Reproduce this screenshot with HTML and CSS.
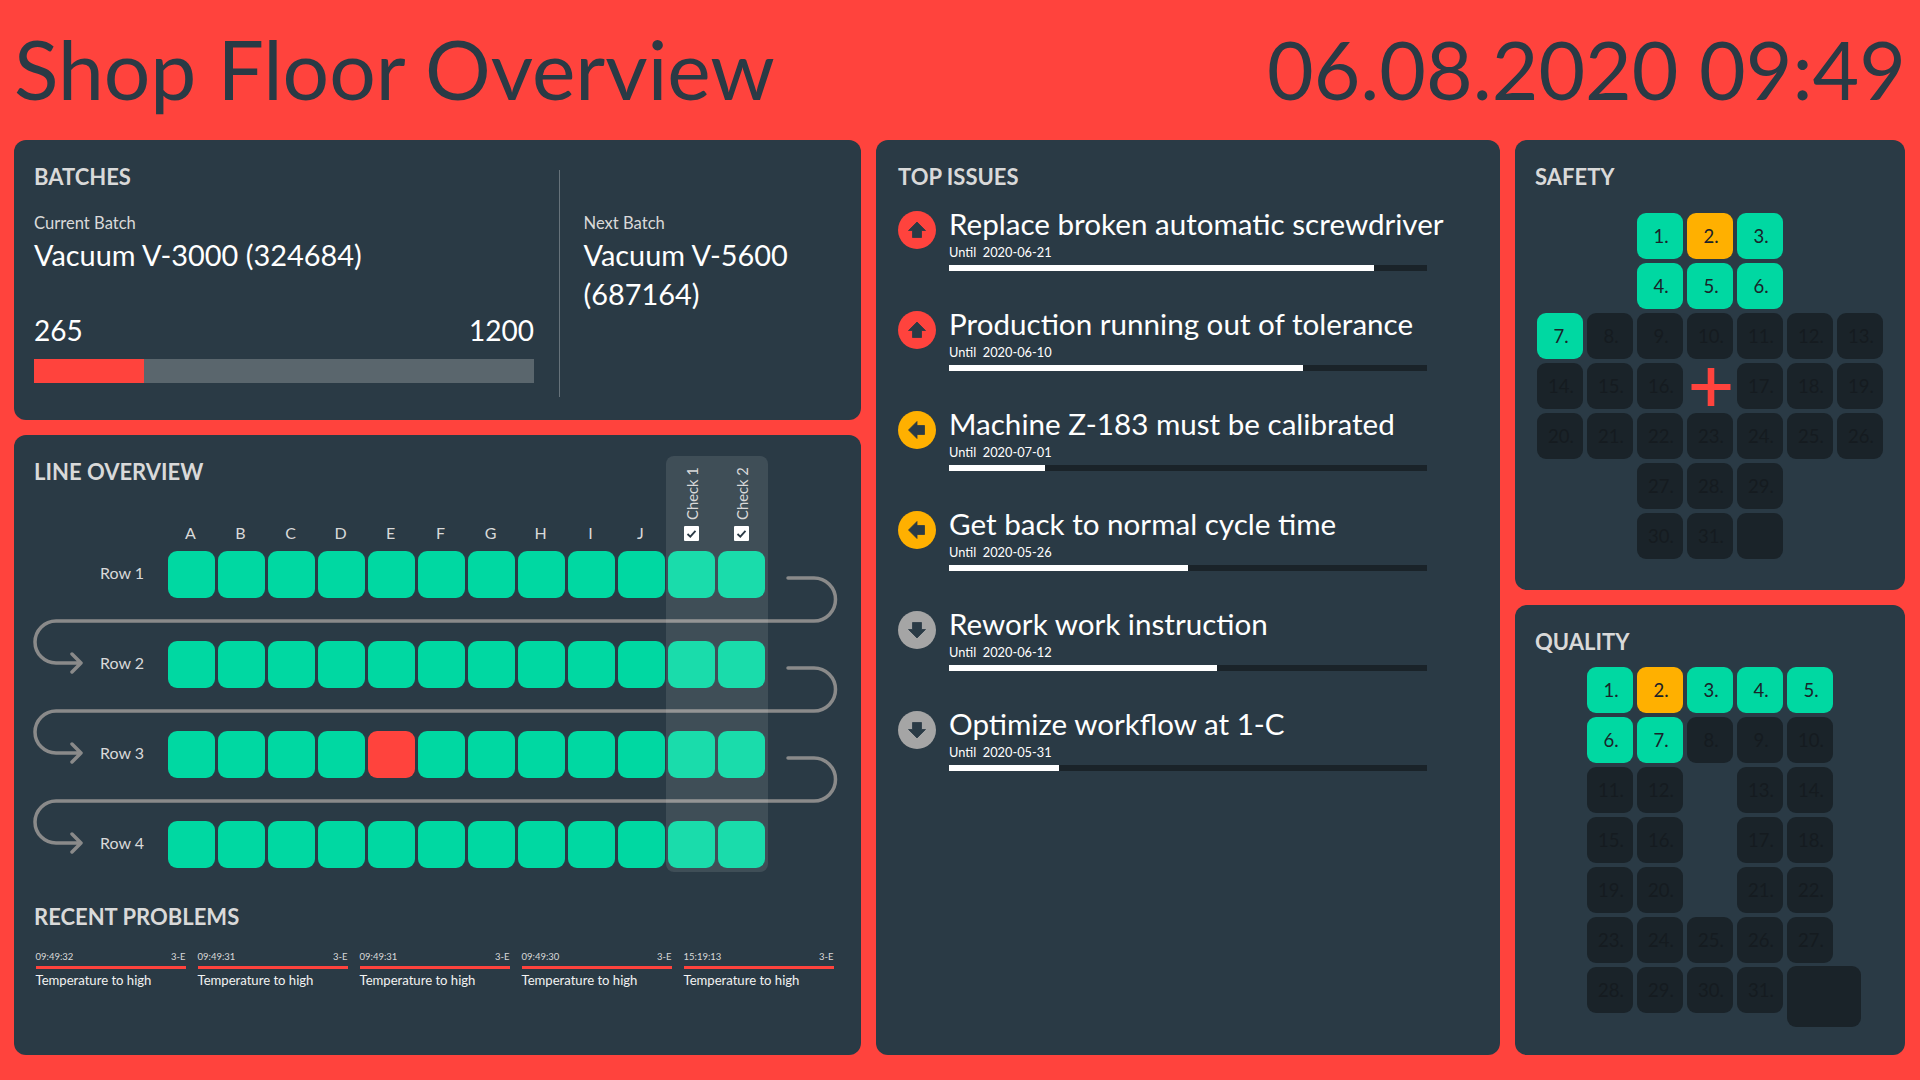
FILE: index.html
```html
<!DOCTYPE html>
<html lang="en">
  <head>
    <meta charset="UTF-8" />
    <title>Shop Floor Overview</title>
    <link rel="stylesheet" href="styles.css">
  </head>
  <body>
    <header class="top">
      <h1>Shop Floor Overview</h1>
      <div class="clock">06.08.2020 09:49</div>
    </header>

    <main class="board">
      <div class="col-left">
        <section class="card batches">
          <div class="batch-current">
            <h2>BATCHES</h2>
            <div class="batch-label">Current Batch</div>
            <div class="batch-name">Vacuum V-3000 (324684)</div>
            <div class="batch-count"><span>265</span><span>1200</span></div>
            <div class="batch-bar"><div class="batch-fill" style="width: 22%"></div></div>
          </div>
          <div class="batch-next">
            <div class="batch-label">Next Batch</div>
            <div class="batch-name">Vacuum V-5600 (687164)</div>
          </div>
        </section>

        <section class="card line">
          <h2>LINE OVERVIEW</h2>
          <div class="line-head">
            <span>A</span><span>B</span><span>C</span><span>D</span><span>E</span><span>F</span><span>G</span><span>H</span><span>I</span><span>J</span>
          </div>
          <div class="line-row">
            <div class="row-name">Row 1</div>
            <i></i><i></i><i></i><i></i><i></i><i></i><i></i><i></i><i></i><i></i><i></i><i></i>
          </div>
          <div class="line-row">
            <div class="row-name">Row 2</div>
            <i></i><i></i><i></i><i></i><i></i><i></i><i></i><i></i><i></i><i></i><i></i><i></i>
          </div>
          <div class="line-row">
            <div class="row-name">Row 3</div>
            <i></i><i></i><i></i><i></i><i class="bad"></i><i></i><i></i><i></i><i></i><i></i><i></i><i></i>
          </div>
          <div class="line-row">
            <div class="row-name">Row 4</div>
            <i></i><i></i><i></i><i></i><i></i><i></i><i></i><i></i><i></i><i></i><i></i><i></i>
          </div>

          <svg class="flow" viewBox="14 435 847 620" fill="none" stroke="#8a8a8a" stroke-width="3.5" stroke-linecap="round" stroke-linejoin="round">
            <path d="M788 578H814A21.5 21.5 0 0 1 814 621H56A21 21 0 0 0 56 663H81M72 654L81 663L72 672" />
            <path d="M788 668H814A21.5 21.5 0 0 1 814 711H56A21 21 0 0 0 56 753H81M72 744L81 753L72 762" />
            <path d="M788 758H814A21.5 21.5 0 0 1 814 801H56A21 21 0 0 0 56 843H81M72 834L81 843L72 852" />
          </svg>

          <div class="checks">
            <div class="check">
              <span class="check-name">Check 1</span>
              <svg class="check-box" viewBox="0 0 15 15"><rect width="15" height="15" rx="1" fill="#fff" /><path d="M3.5 8L6.3 10.6L11.5 4.8" fill="none" stroke="#2a3a45" stroke-width="1.8" /></svg>
            </div>
            <div class="check">
              <span class="check-name">Check 2</span>
              <svg class="check-box" viewBox="0 0 15 15"><rect width="15" height="15" rx="1" fill="#fff" /><path d="M3.5 8L6.3 10.6L11.5 4.8" fill="none" stroke="#2a3a45" stroke-width="1.8" /></svg>
            </div>
          </div>

          <h2 class="problems-title">RECENT PROBLEMS</h2>
          <div class="problems">
            <div class="problem">
              <div class="problem-meta"><span>09:49:32</span><span>3-E</span></div>
              <div class="problem-text">Temperature to high</div>
            </div>
            <div class="problem">
              <div class="problem-meta"><span>09:49:31</span><span>3-E</span></div>
              <div class="problem-text">Temperature to high</div>
            </div>
            <div class="problem">
              <div class="problem-meta"><span>09:49:31</span><span>3-E</span></div>
              <div class="problem-text">Temperature to high</div>
            </div>
            <div class="problem">
              <div class="problem-meta"><span>09:49:30</span><span>3-E</span></div>
              <div class="problem-text">Temperature to high</div>
            </div>
            <div class="problem">
              <div class="problem-meta"><span>15:19:13</span><span>3-E</span></div>
              <div class="problem-text">Temperature to high</div>
            </div>
          </div>
        </section>
      </div>

      <section class="card issues">
        <h2>TOP ISSUES</h2>

        <div class="issue">
          <svg class="issue-icon" viewBox="0 0 38 38"><circle cx="19" cy="19" r="19" fill="#ff433d" /><path class="arrow" d="M19 11L27.5 19.5H23.5V26.5H14.5V19.5H10.5Z" /></svg>
          <div class="issue-body">
            <div class="issue-title">Replace broken automatic screwdriver</div>
            <div class="issue-until">Until&nbsp; 2020-06-21</div>
            <div class="issue-bar"><div class="issue-fill" style="width: 89%"></div></div>
          </div>
        </div>
        <div class="issue">
          <svg class="issue-icon" viewBox="0 0 38 38"><circle cx="19" cy="19" r="19" fill="#ff433d" /><path class="arrow" d="M19 11L27.5 19.5H23.5V26.5H14.5V19.5H10.5Z" /></svg>
          <div class="issue-body">
            <div class="issue-title">Production running out of tolerance</div>
            <div class="issue-until">Until&nbsp; 2020-06-10</div>
            <div class="issue-bar"><div class="issue-fill" style="width: 74%"></div></div>
          </div>
        </div>
        <div class="issue">
          <svg class="issue-icon" viewBox="0 0 38 38"><circle cx="19" cy="19" r="19" fill="#ffb000" /><path class="arrow" d="M10.5 19L19 10.5V14.5H26.5V23.5H19V27.5Z" /></svg>
          <div class="issue-body">
            <div class="issue-title">Machine Z-183 must be calibrated</div>
            <div class="issue-until">Until&nbsp; 2020-07-01</div>
            <div class="issue-bar"><div class="issue-fill" style="width: 20%"></div></div>
          </div>
        </div>
        <div class="issue">
          <svg class="issue-icon" viewBox="0 0 38 38"><circle cx="19" cy="19" r="19" fill="#ffb000" /><path class="arrow" d="M10.5 19L19 10.5V14.5H26.5V23.5H19V27.5Z" /></svg>
          <div class="issue-body">
            <div class="issue-title">Get back to normal cycle time</div>
            <div class="issue-until">Until&nbsp; 2020-05-26</div>
            <div class="issue-bar"><div class="issue-fill" style="width: 50%"></div></div>
          </div>
        </div>
        <div class="issue">
          <svg class="issue-icon" viewBox="0 0 38 38"><circle cx="19" cy="19" r="19" fill="#a5a5a5" /><path class="arrow" d="M19 27L10.5 18.5H14.5V11.5H23.5V18.5H27.5Z" /></svg>
          <div class="issue-body">
            <div class="issue-title">Rework work instruction</div>
            <div class="issue-until">Until&nbsp; 2020-06-12</div>
            <div class="issue-bar"><div class="issue-fill" style="width: 56%"></div></div>
          </div>
        </div>
        <div class="issue">
          <svg class="issue-icon" viewBox="0 0 38 38"><circle cx="19" cy="19" r="19" fill="#a5a5a5" /><path class="arrow" d="M19 27L10.5 18.5H14.5V11.5H23.5V18.5H27.5Z" /></svg>
          <div class="issue-body">
            <div class="issue-title">Optimize workflow at 1-C</div>
            <div class="issue-until">Until&nbsp; 2020-05-31</div>
            <div class="issue-bar"><div class="issue-fill" style="width: 23%"></div></div>
          </div>
        </div>
      </section>

      <div class="col-right">
        <section class="card safety">
          <h2>SAFETY</h2>
          <div class="days days-safety">
            <b class="blank"></b><b class="blank"></b><b class="ok">1.</b><b class="warn">2.</b><b class="ok">3.</b><b class="blank"></b><b class="blank"></b>
            <b class="blank"></b><b class="blank"></b><b class="ok">4.</b><b class="ok">5.</b><b class="ok">6.</b><b class="blank"></b><b class="blank"></b>
            <b class="ok">7.</b><b>8.</b><b>9.</b><b>10.</b><b>11.</b><b>12.</b><b>13.</b>
            <b>14.</b><b>15.</b><b>16.</b>
            <b class="blank"><svg class="cross" viewBox="0 0 46 46"><rect x="4.5" y="21" width="39" height="6" /><rect x="20.7" y="5" width="6.6" height="38" /></svg></b>
            <b>17.</b><b>18.</b><b>19.</b>
            <b>20.</b><b>21.</b><b>22.</b><b>23.</b><b>24.</b><b>25.</b><b>26.</b>
            <b class="blank"></b><b class="blank"></b><b>27.</b><b>28.</b><b>29.</b><b class="blank"></b><b class="blank"></b>
            <b class="blank"></b><b class="blank"></b><b>30.</b><b>31.</b><b></b><b class="blank"></b><b class="blank"></b>
          </div>
        </section>

        <section class="card quality">
          <h2>QUALITY</h2>
          <div class="days days-quality">
            <b class="ok">1.</b><b class="warn">2.</b><b class="ok">3.</b><b class="ok">4.</b><b class="ok">5.</b>
            <b class="ok">6.</b><b class="ok">7.</b><b>8.</b><b>9.</b><b>10.</b>
            <b>11.</b><b>12.</b><b class="blank"></b><b>13.</b><b>14.</b>
            <b>15.</b><b>16.</b><b class="blank"></b><b>17.</b><b>18.</b>
            <b>19.</b><b>20.</b><b class="blank"></b><b>21.</b><b>22.</b>
            <b>23.</b><b>24.</b><b>25.</b><b>26.</b><b>27.</b>
            <b>28.</b><b>29.</b><b>30.</b><b>31.</b><b class="big"></b>
          </div>
        </section>
      </div>
    </main>
  </body>
</html>
```

FILE: styles.css
```css
* {
  box-sizing: border-box;
}

body {
  font-family: "Lato", sans-serif;
  background-color: #ff433d;
  color: #fff;
  margin: 0;
  width: 1920px;
  height: 1080px;
  overflow: hidden;
  padding: 0 15px 0 14px;
}

.top {
  height: 140px;
  display: flex;
  justify-content: space-between;
  align-items: center;
  padding-bottom: 2px;
  color: #2a3a45;
  line-height: 100px;
}

.top h1 {
  margin: 0;
  font-size: 82.2px;
  font-weight: 400;
}

.clock {
  margin-right: -1px;
  font-size: 80.5px;
}

.board {
  display: grid;
  grid-template-columns: 847px 624px 390px;
  gap: 15px;
  height: 915px;
}

.col-left,
.col-right {
  display: flex;
  flex-direction: column;
  gap: 15px;
}

.card {
  background-color: #2a3a45;
  border-radius: 12px;
  padding: 21px 20px;
}

h2 {
  margin: 0 0 -1px;
  padding-top: 1px;
  color: #d9d9d9;
  font-size: 22px;
  line-height: 30px;
  font-weight: 700;
}

/* batches */
.batches {
  height: 280px;
  display: flex;
}

.batch-current {
  width: 500px;
  margin-right: 24.5px;
}

.batch-next {
  width: 255px;
  height: 227px;
  margin-top: 9px;
  padding: 43px 24px 0;
  border-left: 1px solid #66727a;
}

.batch-label {
  margin-top: 0;
  color: #d9d9d9;
  font-size: 16.6px;
  line-height: 20px;
}

.batch-current .batch-label {
  margin-top: 22px;
}

.batch-name {
  margin-top: 2px;
  font-size: 28.9px;
  line-height: 39px;
}

.batch-count {
  display: flex;
  justify-content: space-between;
  margin-top: 37px;
  font-size: 28px;
  line-height: 39px;
}

.batch-bar {
  height: 24px;
  margin-top: 9px;
  background-color: #5a666d;
}

.batch-fill {
  height: 100%;
  background-color: #ff433d;
}

/* line overview */
.line {
  position: relative;
  height: 620px;
}

.line-head {
  display: flex;
  gap: 3px;
  margin: 37px 0 8px 133px;
  color: #d9d9d9;
  font-size: 16px;
  line-height: 20px;
}

.line-head span {
  width: 47px;
  text-align: center;
}

.line-row {
  display: flex;
  gap: 3px;
  margin-bottom: 43px;
}

.line-row i {
  width: 47px;
  height: 47px;
  border-radius: 9px;
  background-color: #00d8a2;
}

.line-row i.bad {
  background-color: #ff433d;
}

.row-name {
  width: 131px;
  padding: 10px 21px 0 0;
  color: #d9d9d9;
  font-size: 16px;
  line-height: 24px;
  text-align: right;
}

.flow {
  position: absolute;
  left: 0;
  top: 0;
  width: 847px;
  height: 620px;
}

.checks {
  position: absolute;
  left: 652px;
  top: 21px;
  width: 102px;
  height: 416px;
  display: flex;
  padding: 14px 2px 0;
  gap: 3px;
  border-radius: 8px;
  background-color: rgba(255, 255, 255, 0.1);
}

.check {
  width: 47px;
  display: flex;
  flex-direction: column;
  align-items: center;
}

.check-name {
  height: 50px;
  writing-mode: vertical-rl;
  transform: rotate(180deg);
  color: #d9d9d9;
  font-size: 14.8px;
  line-height: 20px;
  white-space: nowrap;
  text-align: left;
}

.check-box {
  width: 15px;
  height: 15px;
  margin-top: 6px;
}

.problems-title {
  margin-top: -10px;
}

.problems {
  display: flex;
  gap: 12px;
  margin: 18px 0 0 1.5px;
}

.problem {
  width: 150px;
}

.problem-meta {
  display: flex;
  justify-content: space-between;
  padding: 1px 0 2px;
  border-bottom: 3px solid #ff433d;
  color: #d9d9d9;
  font-size: 9.5px;
  line-height: 14px;
}

.problem-text {
  margin-top: 2px;
  color: #f2f2f2;
  font-size: 13.1px;
  line-height: 18px;
}

/* top issues */
.issues {
  padding: 21px 22px;
}

.issue {
  display: flex;
  gap: 13px;
  height: 100px;
}

.issue:first-of-type {
  margin-top: 16px;
}

.issue-icon {
  width: 38px;
  height: 38px;
  margin-top: 4px;
  flex: none;
}

.arrow {
  fill: #2a3a45;
  stroke: #2a3a45;
  stroke-width: 0.8;
  stroke-linejoin: round;
}

.issue-body {
  width: 478px;
}

.issue-title {
  margin-top: -2px;
  font-size: 29.6px;
  line-height: 38px;
  white-space: nowrap;
}

.issue-until {
  margin-top: 1px;
  font-size: 12.8px;
  line-height: 16px;
}

.issue-bar {
  height: 6px;
  margin-top: 5px;
  background-color: #1a2329;
}

.issue-fill {
  height: 100%;
  background-color: #fff;
}

/* safety and quality calendars */
.safety {
  height: 450px;
}

.quality {
  height: 450px;
}

.days {
  display: grid;
  grid-auto-rows: 46px;
  gap: 4px;
  font-size: 18.5px;
}

.days-safety {
  grid-template-columns: repeat(7, 46px);
  margin: 22px 0 0 2px;
}

.days-quality {
  grid-template-columns: repeat(5, 46px);
  margin: 11px 0 0 52px;
}

.days b {
  display: flex;
  align-items: center;
  justify-content: center;
  padding-left: 2px;
  border-radius: 9px;
  background-color: #1a2329;
  color: #151b20;
  font-weight: 400;
}

.days b.ok {
  background-color: #00d8a2;
  color: #1a2329;
}

.days b.warn {
  background-color: #ffb000;
  color: #1a2329;
}

.days b.blank {
  background: none;
  padding: 0;
}

.days b.big {
  width: 74px;
  height: 61px;
  margin-top: -1px;
}

.cross {
  width: 46px;
  height: 46px;
  fill: #ff433d;
}
```
